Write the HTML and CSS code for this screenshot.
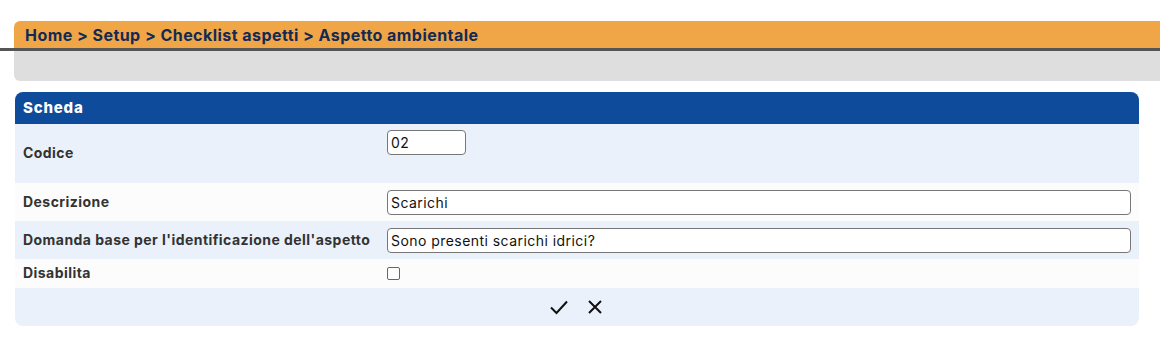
FILE: index.html
```html
<!DOCTYPE html>
<html>
<head>
    <title>Aspetto ambientale</title>
    <link rel="stylesheet" href="styles.css">
</head>
<body>
    <div class="topbar">
        <div class="crumbs">Home &gt; Setup &gt; Checklist aspetti &gt; Aspetto ambientale</div>
    </div>
    <div class="toolbar"></div>

    <div class="card">
        <div class="card-title">Scheda</div>
        <div class="row row-tall alt">
            <div class="label">Codice</div>
            <div class="value top"><input type="text" class="field field-short" value="02"></div>
        </div>
        <div class="row">
            <div class="label">Descrizione</div>
            <div class="value"><input type="text" class="field" value="Scarichi"></div>
        </div>
        <div class="row alt">
            <div class="label">Domanda base per l'identificazione dell'aspetto</div>
            <div class="value"><input type="text" class="field" value="Sono presenti scarichi idrici?"></div>
        </div>
        <div class="row row-small">
            <div class="label">Disabilita</div>
            <div class="value"><span class="check"></span></div>
        </div>
        <div class="actions alt">
            <button class="icon-btn" title="Salva">
                <svg width="20" height="20" viewBox="0 0 20 20"><path d="M2 10.5 L7.5 16 L18 4.5" fill="none" stroke="#111" stroke-width="2"/></svg>
            </button>
            <button class="icon-btn" title="Annulla">
                <svg width="20" height="20" viewBox="0 0 20 20"><path d="M4 4 L16 16 M16 4 L4 16" fill="none" stroke="#111" stroke-width="2"/></svg>
            </button>
        </div>
    </div>
</body>
</html>
```
FILE: styles.css
```css
body {
    margin: 0;
    font-family: Inter, "Noto Sans", sans-serif;
    color: #333;
}
.topbar {
    padding: 21px 0 0 14px;
    border-bottom: 3px solid #555;
}
.crumbs {
    background-color: #f0a546;
    border-top-left-radius: 6px;
    height: 27px;
    line-height: 28px;
    padding-left: 11px;
    font-size: 16px;
    font-weight: 700;
    color: #112a56;
    letter-spacing: 0.45px;
}
.toolbar {
    margin-left: 14px;
    height: 30px;
    background-color: #dedede;
    border-bottom-left-radius: 6px;
}
.card {
    margin: 11px 21px 0 15px;
    border-radius: 8px;
    overflow: hidden;
}
.card-title {
    background-color: #0e4c9b;
    color: #fff;
    height: 32px;
    line-height: 32px;
    padding-left: 8px;
    font-size: 15px;
    font-weight: 800;
    letter-spacing: 0.8px;
}
.row {
    display: grid;
    grid-template-columns: 372px 1fr;
    align-items: center;
    height: 38px;
    padding-right: 8px;
    background-color: #fcfcfc;
}
.alt {
    background-color: #eaf1fa;
}
.row-tall {
    height: 59px;
}
.row-small {
    height: 29px;
}
.label {
    padding: 0 0 2px 8px;
    font-size: 14px;
    font-weight: 700;
    color: #333;
    letter-spacing: 0.45px;
}
.value.top {
    align-self: start;
    padding-top: 6px;
}
.field {
    box-sizing: border-box;
    width: 100%;
    height: 25px;
    padding: 0 3px;
    border: 1px solid #777;
    border-radius: 4px;
    background: #fff;
    font-family: Inter, "Noto Sans", sans-serif;
    font-size: 14px;
    letter-spacing: 0.45px;
    color: #111;
    display: block;
}
.field-short {
    width: 79px;
}
.check {
    display: block;
    width: 11px;
    height: 11px;
    border: 1px solid #666;
    border-radius: 2px;
    background: #fff;
}
.actions {
    height: 38px;
    display: flex;
    justify-content: center;
    align-items: center;
    gap: 16px;
}
.icon-btn {
    background: none;
    border: none;
    padding: 0;
    cursor: pointer;
    display: flex;
}
```
